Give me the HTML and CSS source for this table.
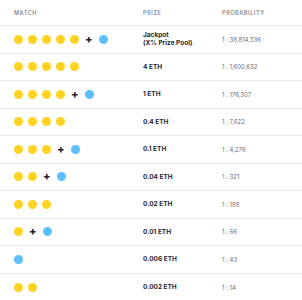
FILE: index.html
```html
<!DOCTYPE html>
<html>
<head>
<meta charset="utf-8">
<link rel="stylesheet" href="styles.css">
</head>
<body>
<div class="table">
  <div class="row head">
    <div class="cell">MATCH</div>
    <div class="cell">PRIZE</div>
    <div class="cell">PROBABILITY</div>
  </div>
  <div class="row">
    <div class="cell balls"><i class="y"></i><i class="y"></i><i class="y"></i><i class="y"></i><i class="y"></i><b class="plus">+</b><i class="b"></i></div>
    <div class="cell prize">Jackpot<br>(X% Prize Pool)</div>
    <div class="cell prob">1 : 38,814,536</div>
  </div>
  <div class="row">
    <div class="cell balls"><i class="y"></i><i class="y"></i><i class="y"></i><i class="y"></i><i class="y"></i></div>
    <div class="cell prize">4 ETH</div>
    <div class="cell prob">1 : 1,600,632</div>
  </div>
  <div class="row">
    <div class="cell balls"><i class="y"></i><i class="y"></i><i class="y"></i><i class="y"></i><b class="plus">+</b><i class="b"></i></div>
    <div class="cell prize">1 ETH</div>
    <div class="cell prob">1 : 176,307</div>
  </div>
  <div class="row">
    <div class="cell balls"><i class="y"></i><i class="y"></i><i class="y"></i><i class="y"></i></div>
    <div class="cell prize">0.4 ETH</div>
    <div class="cell prob">1 : 7,622</div>
  </div>
  <div class="row">
    <div class="cell balls"><i class="y"></i><i class="y"></i><i class="y"></i><b class="plus">+</b><i class="b"></i></div>
    <div class="cell prize">0.1 ETH</div>
    <div class="cell prob">1 : 4,276</div>
  </div>
  <div class="row">
    <div class="cell balls"><i class="y"></i><i class="y"></i><b class="plus">+</b><i class="b"></i></div>
    <div class="cell prize">0.04 ETH</div>
    <div class="cell prob">1 : 321</div>
  </div>
  <div class="row">
    <div class="cell balls"><i class="y"></i><i class="y"></i><i class="y"></i></div>
    <div class="cell prize">0.02 ETH</div>
    <div class="cell prob">1 : 188</div>
  </div>
  <div class="row">
    <div class="cell balls"><i class="y"></i><b class="plus">+</b><i class="b"></i></div>
    <div class="cell prize">0.01 ETH</div>
    <div class="cell prob">1 : 66</div>
  </div>
  <div class="row">
    <div class="cell balls"><i class="b"></i></div>
    <div class="cell prize">0.006 ETH</div>
    <div class="cell prob">1 : 43</div>
  </div>
  <div class="row last">
    <div class="cell balls"><i class="y"></i><i class="y"></i></div>
    <div class="cell prize">0.002 ETH</div>
    <div class="cell prob">1 : 14</div>
  </div>
</div>
</body>
</html>
```
FILE: styles.css
```css
html, body {
  margin: 0;
  padding: 0;
  background: #ffffff;
}
body {
  font-family: Inter, "Liberation Sans", sans-serif;
  color: #1f2533;
}
.table {
  display: flex;
  flex-direction: column;
}
.row {
  display: grid;
  grid-template-columns: 129px 79px 1fr;
  padding-left: 14px;
  height: 27.5px;
  align-items: center;
  border-bottom: 1px solid #e9e9ec;
  box-sizing: border-box;
}
.row.head {
  height: 26px;
  font-size: 5.5px;
  font-weight: 500;
  letter-spacing: 0.6px;
  color: #75787f;
}
.row.last {
  border-bottom: none;
}
.balls {
  display: flex;
  align-items: center;
  gap: 5px;
}
.balls i {
  display: block;
  width: 9px;
  height: 9px;
  border-radius: 50%;
}
.balls i.y { background: #ffd324; }
.balls i.b { background: #5cbfff; }
.plus {
  font-size: 11px;
  font-weight: 800;
  line-height: 9px;
  color: #1b2230;
  margin: 0 1px;
}
.prize {
  font-size: 6.5px;
  font-weight: 700;
  line-height: 8px;
  color: #1f2533;
}
.prob {
  font-size: 6px;
  color: #6a6e76;
}
```
